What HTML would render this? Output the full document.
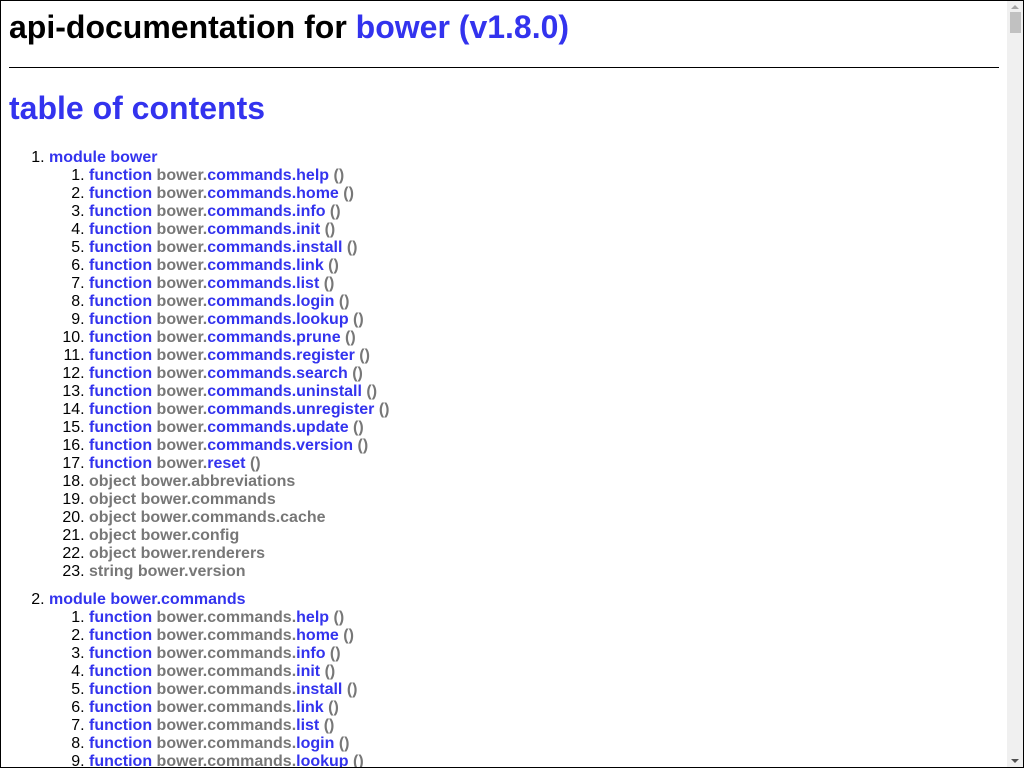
<!DOCTYPE html>
<html><head><meta charset="utf-8">
<style>
html,body{margin:0;padding:0;overflow:hidden;background:#fff;}
body{width:1024px;height:768px;position:relative;font-family:"Liberation Sans",Arial,sans-serif;color:#000;}
#frame{position:fixed;left:0;top:0;width:1022px;height:766px;border:1px solid #000;pointer-events:none;z-index:5}
#sb{position:fixed;left:1007px;top:1px;width:16px;height:766px;background:#f0f0f0;z-index:4}
#thumb{position:absolute;left:3px;top:11px;width:11px;height:21px;background:#c1c1c1}
.arr{position:absolute;left:4px;width:0;height:0;border-left:4px solid transparent;border-right:4px solid transparent}
#up{top:4px;border-bottom:4px solid #a3a3a3}
#dn{bottom:4px;border-top:4px solid #505050}
#c{position:absolute;left:9px;top:9px;width:990px}
h1{margin:0;font-size:32px;line-height:37px;font-weight:bold}
hr{margin:21px 0 0 0;border:0;border-top:1px solid #000;height:0}
h2{margin:22px 0 0 0;font-size:32px;line-height:37px;font-weight:bold;color:#33e}
.b{color:#33e}.g{color:#777}
ol{margin:0;padding-left:40px;font-size:16px;line-height:18px}
ol.top{margin-top:22px}
ol.top>li{margin-bottom:10px}
li span{font-weight:bold}
</style></head><body>
<div id="frame"></div>
<div id="sb"><div class="arr" id="up"></div><div id="thumb"></div><div class="arr" id="dn"></div></div>
<div id="c">
<h1>api-documentation for <span class="b">bower (v1.8.0)</span></h1>
<hr>
<h2>table of contents</h2>
<ol class="top">
<li><span class="b">module bower</span>
<ol>
<li><span><span class="b">function</span> <span class="g">bower.</span><span class="b">commands.help</span> <span class="g">()</span></span></li>
<li><span><span class="b">function</span> <span class="g">bower.</span><span class="b">commands.home</span> <span class="g">()</span></span></li>
<li><span><span class="b">function</span> <span class="g">bower.</span><span class="b">commands.info</span> <span class="g">()</span></span></li>
<li><span><span class="b">function</span> <span class="g">bower.</span><span class="b">commands.init</span> <span class="g">()</span></span></li>
<li><span><span class="b">function</span> <span class="g">bower.</span><span class="b">commands.install</span> <span class="g">()</span></span></li>
<li><span><span class="b">function</span> <span class="g">bower.</span><span class="b">commands.link</span> <span class="g">()</span></span></li>
<li><span><span class="b">function</span> <span class="g">bower.</span><span class="b">commands.list</span> <span class="g">()</span></span></li>
<li><span><span class="b">function</span> <span class="g">bower.</span><span class="b">commands.login</span> <span class="g">()</span></span></li>
<li><span><span class="b">function</span> <span class="g">bower.</span><span class="b">commands.lookup</span> <span class="g">()</span></span></li>
<li><span><span class="b">function</span> <span class="g">bower.</span><span class="b">commands.prune</span> <span class="g">()</span></span></li>
<li><span><span class="b">function</span> <span class="g">bower.</span><span class="b">commands.register</span> <span class="g">()</span></span></li>
<li><span><span class="b">function</span> <span class="g">bower.</span><span class="b">commands.search</span> <span class="g">()</span></span></li>
<li><span><span class="b">function</span> <span class="g">bower.</span><span class="b">commands.uninstall</span> <span class="g">()</span></span></li>
<li><span><span class="b">function</span> <span class="g">bower.</span><span class="b">commands.unregister</span> <span class="g">()</span></span></li>
<li><span><span class="b">function</span> <span class="g">bower.</span><span class="b">commands.update</span> <span class="g">()</span></span></li>
<li><span><span class="b">function</span> <span class="g">bower.</span><span class="b">commands.version</span> <span class="g">()</span></span></li>
<li><span><span class="b">function</span> <span class="g">bower.</span><span class="b">reset</span> <span class="g">()</span></span></li>
<li><span class="g">object bower.abbreviations</span></li>
<li><span class="g">object bower.commands</span></li>
<li><span class="g">object bower.commands.cache</span></li>
<li><span class="g">object bower.config</span></li>
<li><span class="g">object bower.renderers</span></li>
<li><span class="g">string bower.version</span></li>
</ol></li>
<li><span class="b">module bower.commands</span>
<ol>
<li><span><span class="b">function</span> <span class="g">bower.commands.</span><span class="b">help</span> <span class="g">()</span></span></li>
<li><span><span class="b">function</span> <span class="g">bower.commands.</span><span class="b">home</span> <span class="g">()</span></span></li>
<li><span><span class="b">function</span> <span class="g">bower.commands.</span><span class="b">info</span> <span class="g">()</span></span></li>
<li><span><span class="b">function</span> <span class="g">bower.commands.</span><span class="b">init</span> <span class="g">()</span></span></li>
<li><span><span class="b">function</span> <span class="g">bower.commands.</span><span class="b">install</span> <span class="g">()</span></span></li>
<li><span><span class="b">function</span> <span class="g">bower.commands.</span><span class="b">link</span> <span class="g">()</span></span></li>
<li><span><span class="b">function</span> <span class="g">bower.commands.</span><span class="b">list</span> <span class="g">()</span></span></li>
<li><span><span class="b">function</span> <span class="g">bower.commands.</span><span class="b">login</span> <span class="g">()</span></span></li>
<li><span><span class="b">function</span> <span class="g">bower.commands.</span><span class="b">lookup</span> <span class="g">()</span></span></li>
<li><span><span class="b">function</span> <span class="g">bower.commands.</span><span class="b">prune</span> <span class="g">()</span></span></li>
</ol></li>
</ol>
</div>
</body></html>
